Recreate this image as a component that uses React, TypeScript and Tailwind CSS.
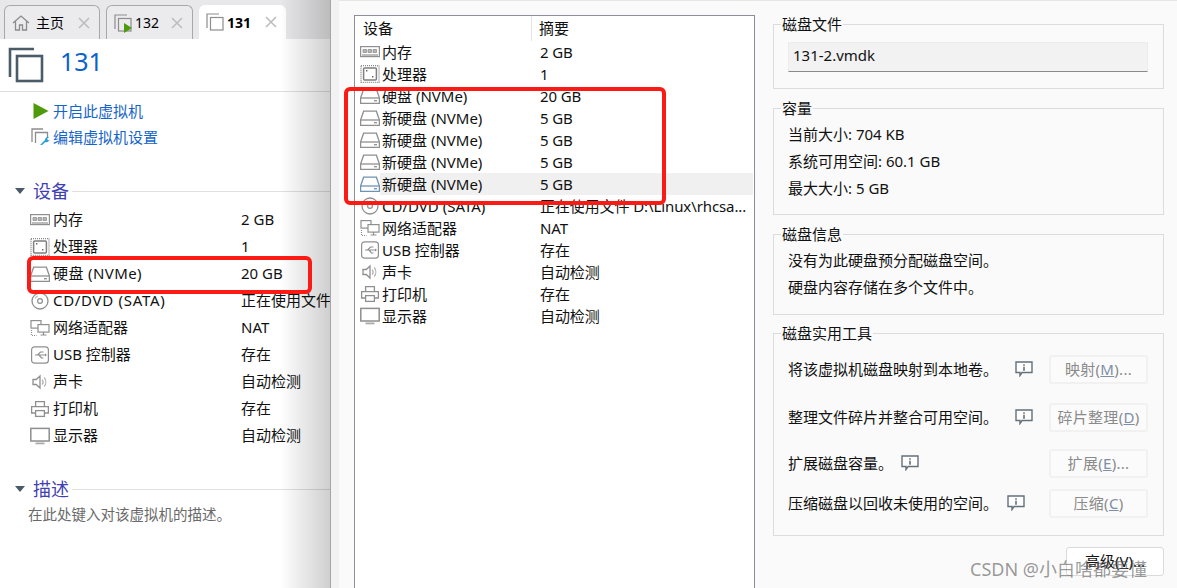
import React from "react";

const FONT = "font-['Noto_Sans','Noto_Sans_CJK_SC',sans-serif]";
const G = "#8f8f8f";

function Svg({ children, w = 20, h = 18 }: { children: React.ReactNode; w?: number; h?: number }) {
  return (
    <svg width={w} height={h} viewBox="0 0 20 18" fill="none" stroke={G} strokeWidth="1.2" className="shrink-0">
      {children}
    </svg>
  );
}

const Mem = () => (
  <Svg>
    <rect x="0.600" y="3.600" width="18.800" height="10" />
    <path d="M3 6.500h3.500v3H3zM8 6.500h3.500v3H8zM13 6.500h3.500v3H13z" fill="#b5b5b5" strokeWidth="0.800" />
    <path d="M2 12h16" />
  </Svg>
);
const Cpu = () => (
  <Svg>
    <rect x="1" y="0.600" width="18" height="16.800" strokeWidth="1.400" strokeDasharray="1 1" stroke="#8a8a8a" />
    <rect x="3.600" y="3.100" width="12.800" height="11.800" rx="1" strokeWidth="1.500" stroke="#7f7f7f" fill="#fff" />
    <path d="M6 5h1.400v1.400H6zM12 11h1.400v1.400H12z" fill="#666" strokeWidth="0" />
  </Svg>
);
const Hdd = ({ blue }: { blue?: boolean }) => {
  const c = blue ? "#6f93b3" : G;
  return (
    <svg width="20" height="18" viewBox="0 0 20 18" fill="none" stroke={c} strokeWidth="1.300" className="shrink-0">
      <path d="M3.600 2.200h12.800l3 8.800v5.400H0.600V11z" />
      <path d="M0.800 11h18.400" />
      <path d="M14 13.700h3" />
    </svg>
  );
};
const Cd = () => (
  <Svg>
    <circle cx="10" cy="9" r="8" strokeWidth="1.300" />
    <circle cx="10" cy="9" r="2.400" />
    <path d="M5 6.500a5.500 5.500 0 0 1 3-2.500" stroke="#bbb" />
  </Svg>
);
const Net = () => (
  <Svg>
    <rect x="1" y="1.600" width="10" height="7.500" />
    <rect x="8" y="5.600" width="11" height="7.500" fill="#fff" />
    <path d="M13.500 13v2.500M10.500 16h6" />
    <path d="M1.500 11v5.500h5" strokeDasharray="1 1" />
  </Svg>
);
const Usb = () => (
  <Svg>
    <rect x="1.600" y="0.800" width="16.800" height="16.400" rx="3" />
    <path d="M5 9h10M7.500 9l3-3h3M9 9l2.500 3h2" />
    <path d="M15 7.600v2.800l2-1.400z" fill={G} strokeWidth="0" />
  </Svg>
);
const Speaker = () => (
  <Svg>
    <path d="M3 6.500h3.200L10 3v12l-3.800-3.500H3z" strokeWidth="1.300" />
    <path d="M12.200 6.500a4 4 0 0 1 0 5M14.200 4.500a7 7 0 0 1 0 9" stroke="#b0b0b0" />
  </Svg>
);
const Printer = () => (
  <Svg>
    <path d="M5.600 6V1.600h8.800V6" strokeWidth="1.300" />
    <path d="M5 13H1.600V6.600h16.800V13H15" strokeWidth="1.300" />
    <rect x="5.600" y="10.600" width="8.800" height="5.800" strokeWidth="1.300" />
  </Svg>
);
const Monitor = () => (
  <Svg>
    <rect x="0.800" y="1.400" width="18.400" height="12.600" strokeWidth="1.500" />
    <path d="M5.500 16.400h9" strokeWidth="1.800" stroke="#aaa" />
  </Svg>
);

const Copies = ({ size, color, width }: { size: number; color: string; width: number }) => (
  <svg width={size} height={size} viewBox="0 0 36 36" fill="none" stroke={color} strokeWidth={width} className="shrink-0">
    <path d="M26 2H2v28" />
    <rect x="9" y="9" width="25" height="25" />
  </svg>
);

const InfoBubble = () => (
  <svg width="18" height="16" viewBox="0 0 18 16" fill="none" className="shrink-0">
    <path d="M1 1h16v10.500H7L5 14.500V11.500H1z" fill="#fff" stroke="#64707a" strokeWidth="1.400" />
    <path d="M8.200 3.200h1.600v1.500H8.200zM8.200 5.800h1.600v4H8.200z" fill="#64707a" />
  </svg>
);

const X = () => (
  <svg width="12" height="12" viewBox="0 0 12 12" stroke="#bdbdbd" strokeWidth="1.600" className="shrink-0">
    <path d="M1 1l10 10M11 1L1 11" />
  </svg>
);

function Tab({ active, width, icon, label, bold }: { active?: boolean; width: string; icon: React.ReactNode; label: string; bold?: boolean }) {
  return (
    <div
      className={`${width} h-[34px] flex items-center rounded-t-[6px] pl-[7px] pr-[9px] ${
        active ? "bg-white" : "border border-b-0 border-[#a8a8ac] bg-[#ebebed]"
      }`}
    >
      {icon}
      <span className={`ml-[3px] text-[14px] text-black flex-1 ${bold ? "font-bold" : ""}`}>{label}</span>
      <X />
    </div>
  );
}

const leftRows: [React.ReactNode, string, string, string?][] = [
  [<Mem />, "内存", "2 GB"],
  [<Cpu />, "处理器", "1"],
  [<Hdd />, "硬盘 (NVMe)", "20 GB", "tracking-[0.4px]"],
  [<Cd />, "CD/DVD (SATA)", "正在使用文件", "tracking-[0.7px]"],
  [<Net />, "网络适配器", "NAT"],
  [<Usb />, "USB 控制器", "存在"],
  [<Speaker />, "声卡", "自动检测"],
  [<Printer />, "打印机", "存在"],
  [<Monitor />, "显示器", "自动检测"],
];

const midRows: [React.ReactNode, string, string, boolean?][] = [
  [<Mem />, "内存", "2 GB"],
  [<Cpu />, "处理器", "1"],
  [<Hdd />, "硬盘 (NVMe)", "20 GB"],
  [<Hdd />, "新硬盘 (NVMe)", "5 GB"],
  [<Hdd />, "新硬盘 (NVMe)", "5 GB"],
  [<Hdd />, "新硬盘 (NVMe)", "5 GB"],
  [<Hdd blue />, "新硬盘 (NVMe)", "5 GB", true],
  [<Cd />, "CD/DVD (SATA)", "正在使用文件 D:\\Linux\\rhcsa..."],
  [<Net />, "网络适配器", "NAT"],
  [<Usb />, "USB 控制器", "存在"],
  [<Speaker />, "声卡", "自动检测"],
  [<Printer />, "打印机", "存在"],
  [<Monitor />, "显示器", "自动检测"],
];

function SectionHead({ label }: { label: string }) {
  return (
    <div className="flex items-center h-[26px] pl-[15px]">
      <div className="w-0 h-0 border-x-[5px] border-x-transparent border-t-[6px] border-t-[#4a5a68] mr-[8px]" />
      <span className="text-[18px] text-[#3f3fb4]">{label}</span>
      <div className="flex-1 h-px bg-[#dfdfdf] ml-[3px]" />
    </div>
  );
}

function Group({ title, className, children }: { title: string; className: string; children: React.ReactNode }) {
  return (
    <fieldset className={`border border-[#dcdcdc] pl-[14px] pr-[15px] ${className}`}>
      <legend className="-ml-[7px] px-[1px] text-[15px] leading-[20px] text-[#111]">{title}</legend>
      {children}
    </fieldset>
  );
}

function ToolRow({ text, btn, u, tail, gap, h }: { text: string; btn: string; u: string; tail: string; gap: string; h: string }) {
  return (
    <div className={`flex items-center ${h}`}>
      <span className="text-[15px] text-[#111]">{text}</span>
      <span className={`${gap} flex-none`}><InfoBubble /></span>
      <div className="ml-auto w-[99px] h-[29px] border-[2px] border-[#f1f1f1] rounded-[3px] bg-[#fbfbfb] flex items-center justify-center text-[15px] text-[#8a8a8a] tracking-[0.3px]">
        <span>{btn}(<span className="underline text-[#7d8ea8]">{u}</span>){tail}</span>
      </div>
    </div>
  );
}

export default function App() {
  return (
    <div className={`${FONT} relative w-[1177px] h-[588px] overflow-hidden flex bg-[#f7f7f7]`}>
      {/* left column */}
      <div className="relative w-[330px] h-full flex flex-col bg-white overflow-hidden shrink-0">
        <div className="h-[39px] bg-[#e8e8ea] flex items-end gap-[6px] pl-[4px]">
          <Tab
            width="w-[96px]"
            label="主页"
            icon={
              <svg width="18" height="18" viewBox="0 0 18 18" fill="none" stroke="#8b8b8b" strokeWidth="1.300" className="shrink-0 mr-[3px]">
                <path d="M1 9l8-7 8 7M3.500 7.500V16h4v-5h3v5h4V7.500" />
              </svg>
            }
          />
          <Tab
            width="w-[87px]"
            label="132"
            icon={
              <span className="relative w-[18px] h-[18px] shrink-0">
                <Copies size={18} color="#8d8d8d" width={2.4} />
                <svg width="10" height="10" viewBox="0 0 10 10" className="absolute right-[-1px] bottom-[-1px]">
                  <path d="M1 0l8 5-8 5z" fill="#4f9a0a" />
                </svg>
              </span>
            }
          />
          <Tab width="w-[87px]" label="131" bold active icon={<Copies size={18} color="#8d8d8d" width={2.4} />} />
        </div>
        <div className="h-[53px] flex items-center pl-[8px] border-b border-[#dedede] shrink-0">
          <Copies size={36} color="#4b5b68" width={2.6} />
          <span className="ml-[16px] text-[25px] leading-none text-[#0b63c8] mb-[7px]">131</span>
        </div>
        <div className="flex flex-col pt-[6px] pl-[31px] text-[15px] text-[#1565c8]">
          <div className="flex items-center h-[26px]">
            <svg width="18" height="18" viewBox="0 0 18 18" className="shrink-0 ml-[1px] mr-[3px]">
              <path d="M1.500 1l15 8-15 8z" fill="#4f9a0a" />
            </svg>
            开启此虚拟机
          </div>
          <div className="flex items-center h-[26px]">
            <svg width="19" height="18" viewBox="0 0 19 18" fill="none" className="shrink-0 mr-[3px]">
              <path d="M12 1H1v13" stroke="#8d8d8d" strokeWidth="1.300" />
              <path d="M4.500 15V4.500h12v5" stroke="#8d8d8d" strokeWidth="1.300" />
              <path d="M9 17l5-5a3 3 0 0 1 4-3l-2 2 1.500 1.500 1-1.500a3 3 0 0 1-4 3l-3.500 3z" fill="#2a9cd8" />
            </svg>
            编辑虚拟机设置
          </div>
        </div>
        <div className="mt-[28px]">
          <SectionHead label="设备" />
        </div>
        <div className="flex flex-col mt-[2px]">
          {leftRows.map(([ic, l, v, t], i) => (
            <div key={i} className="flex items-center h-[27px] pl-[30px] text-[15px] text-[#111] whitespace-nowrap">
              {ic}
              <span className={`ml-[3px] w-[188px] shrink-0 ${t ?? ""}`}>{l}</span>
              <span>{v}</span>
            </div>
          ))}
        </div>
        <div className="mt-[27px]">
          <SectionHead label="描述" />
        </div>
        <div className="pl-[28px] mt-[2px] text-[14.500px] leading-[20px] text-[#6a6a6a]">在此处键入对该虚拟机的描述。</div>
        <div className="absolute right-0 top-0 bottom-0 w-[50px] pointer-events-none bg-gradient-to-r from-transparent to-[#00000030]" />
      </div>
      <div className="w-px h-full bg-[#a6a6a6] shrink-0" />
      <div className="w-[8px] h-full bg-[#f2f2f2] shrink-0" />

      {/* right area */}
      <div className="flex-1 h-full bg-[#fafafa] flex items-start pt-[14px] pl-[15px] border-t border-[#e6e6e6]">
        <div className="w-[401px] h-[600px] shrink-0 border border-[#8e8e98] bg-white text-[15px] text-[#111] whitespace-nowrap">
          <div className="flex h-[25px] items-center">
            <span className="w-[177px] pl-[8px] h-full flex items-center border-r border-[#e4e4e4] pb-[1px]">设备</span>
            <span className="pl-[7px] pb-[1px]">摘要</span>
          </div>
          {midRows.map(([ic, l, v, sel], i) => (
            <div key={i} className="flex items-center h-[22px] pl-[5px]">
              {ic}
              <div className={`flex flex-1 items-center h-full mr-[1px] ${sel ? "bg-[#f0f0f0]" : ""}`}>
                <span className="ml-[2px] w-[158px] shrink-0">{l}</span>
                <span className="tracking-[-0.1px]">{v}</span>
              </div>
            </div>
          ))}
        </div>
        <div className="ml-[18px] w-[391px] flex flex-col shrink-0 -mt-px">
          <Group title="磁盘文件" className="h-[75px]">
            <div className="mt-[8px] h-[30px] bg-[#f2f2f2] border border-[#ececec] border-b-[#8a8a8a] flex items-center pl-[4px] pb-[3px] text-[15px] text-[#111]">
              131-2.vmdk
            </div>
          </Group>
          <Group title="容量" className="h-[117px] mt-[9px]">
            <div className="flex flex-col pt-[3px] text-[15px] text-[#111]">
              <div className="h-[27px] flex items-center">当前大小: 704 KB</div>
              <div className="h-[27px] flex items-center">系统可用空间: 60.1 GB</div>
              <div className="h-[27px] flex items-center">最大大小: 5 GB</div>
            </div>
          </Group>
          <Group title="磁盘信息" className="h-[91px] mt-[9px]">
            <div className="flex flex-col pt-[3px] text-[15px] text-[#111]">
              <div className="h-[27px] flex items-center">没有为此硬盘预分配磁盘空间。</div>
              <div className="h-[27px] flex items-center">硬盘内容存储在多个文件中。</div>
            </div>
          </Group>
          <Group title="磁盘实用工具" className="h-[213px] mt-[8px]">
            <div className="flex flex-col pt-[1px]">
              <ToolRow text="将该虚拟机磁盘映射到本地卷。" btn="映射" u="M" tail="..." gap="ml-[17px]" h="h-[50px]" />
              <ToolRow text="整理文件碎片并整合可用空间。" btn="碎片整理" u="D" tail="" gap="ml-[17px]" h="h-[46px]" />
              <ToolRow text="扩展磁盘容量。" btn="扩展" u="E" tail="..." gap="ml-[8px]" h="h-[46px]" />
              <ToolRow text="压缩磁盘以回收未使用的空间。" btn="压缩" u="C" tail="" gap="ml-[9px]" h="h-[34px]" />
            </div>
          </Group>
          <div className="flex justify-end mt-[11px]">
            <div className="w-[98px] h-[29px] bg-white border border-[#dadada] rounded-[3px] flex items-center justify-center text-[15px] text-[#111]">
              <span>高级(<span className="underline">V</span>)...</span>
            </div>
          </div>
        </div>
      </div>

      {/* annotations */}
      <div className="absolute left-[27px] top-[256px] w-[285px] h-[38px] border-[4px] border-[#fb1a14] rounded-[6px] pointer-events-none" />
      <div className="absolute left-[344px] top-[87px] w-[322px] h-[118px] border-[4px] border-[#fb1a14] rounded-[6px] pointer-events-none" />
      <div className="absolute left-[970px] top-[556px] text-[18px] leading-[26px] text-[#55555599] whitespace-nowrap pointer-events-none">
        CSDN @小白啥都要懂
      </div>
    </div>
  );
}
